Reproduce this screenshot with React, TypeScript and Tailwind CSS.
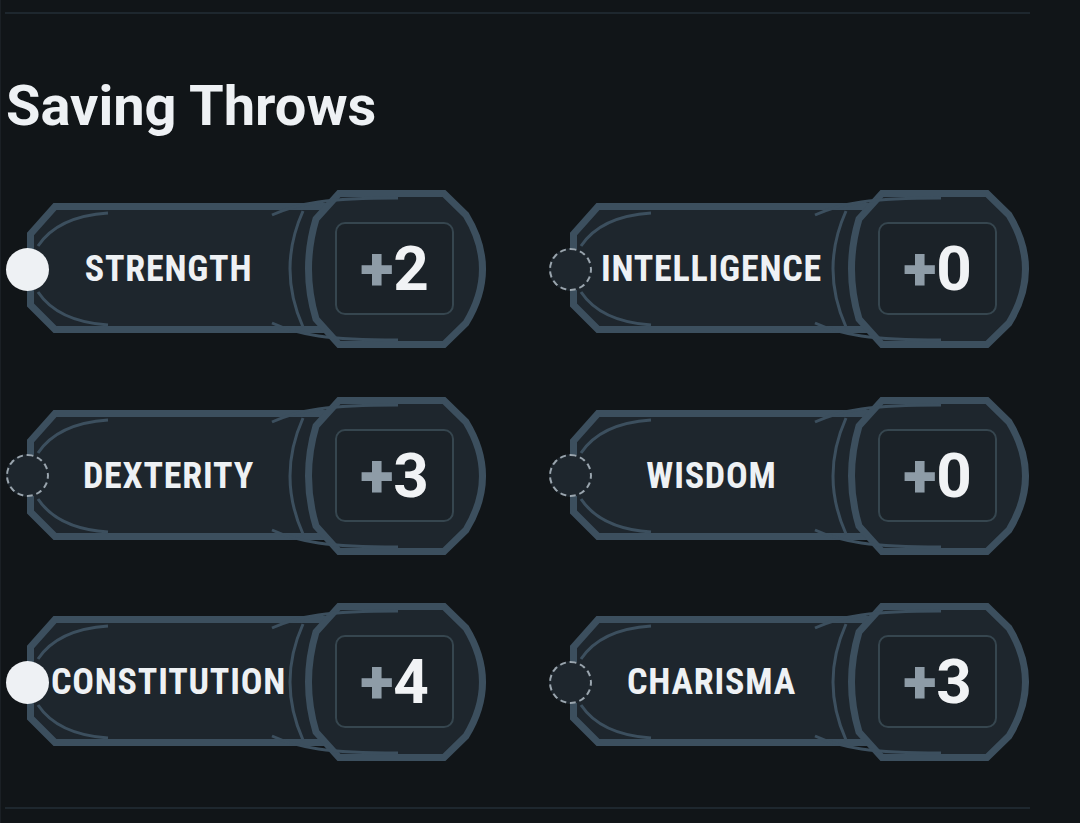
import React from "react";

type Row = { label: string; value: string; checked: boolean };

const rows: Row[] = [
  { label: "STRENGTH", value: "2", checked: true },
  { label: "INTELLIGENCE", value: "0", checked: false },
  { label: "DEXTERITY", value: "3", checked: false },
  { label: "WISDOM", value: "0", checked: false },
  { label: "CONSTITUTION", value: "4", checked: true },
  { label: "CHARISMA", value: "3", checked: false },
];

const BORDER = "#3c4f5e";
const FILL = "#1e262d";

function Frame() {
  return (
    <svg
      className="absolute inset-0"
      width={482}
      height={158}
      viewBox="0 0 482 158"
      fill="none"
    >
      {/* body */}
      <path
        d="M49 16.5 L340 16.5 L340 139.5 L49 139.5 L24.5 115 L24.5 44 Z"
        fill={FILL}
        stroke={BORDER}
        strokeWidth={7}
        strokeLinejoin="miter"
      />
      {/* inner left curves */}
      <path d="M102 23 C72 25 46 35 32 56" stroke={BORDER} strokeWidth={3} />
      <path d="M102 135 C72 133 46 123 32 102" stroke={BORDER} strokeWidth={3} />
      {/* thin arc right of body */}
      <path d="M297 21 Q271 79 297 137" stroke={BORDER} strokeWidth={3} />
      {/* circle piece */}
      <path
        d="M333 3.5 L438 3.5 L460 25 Q493 79 460 133 L438 154.5 L333 154.5 L310 129 Q295 79 310 29 Z"
        fill={FILL}
        stroke={BORDER}
        strokeWidth={7}
        strokeLinejoin="miter"
      />
      {/* swooshes */}
      <path d="M266 25 C292 13 322 8 392 8" stroke={BORDER} strokeWidth={3} />
      <path d="M266 133 C292 145 322 150 392 150" stroke={BORDER} strokeWidth={3} />
      {/* value box */}
      <rect
        x={330}
        y={33}
        width={117}
        height={91}
        rx={9}
        fill="#1b2228"
        stroke="#36464f"
        strokeWidth={2}
      />
    </svg>
  );
}

function Item({ label, value, checked }: Row) {
  return (
    <div className="relative w-[482px] h-[158px]">
      <Frame />
      <div className="relative flex h-full items-center">
        {checked ? (
          <div className="w-[43px] h-[43px] rounded-full bg-[#eef1f4] shrink-0" />
        ) : (
          <div className="w-[43px] h-[43px] rounded-full bg-[#1e262d] border-2 border-dashed border-[#9aa5ae] shrink-0" />
        )}
        <div className="w-[239px] flex justify-center shrink-0">
          <span className="whitespace-nowrap text-[36px] leading-none font-bold tracking-[0.8px] text-[#eef1f4] font-['Roboto_Condensed',Roboto,sans-serif]">
            {label}
          </span>
        </div>
        <div className="ml-[47px] w-[119px] flex justify-center shrink-0 font-['Roboto',sans-serif] text-[62px] leading-none">
          <span className="text-[#8e9ca7] font-black">+</span>
          <span className="text-[#f1f3f5] font-bold">{value}</span>
        </div>
      </div>
    </div>
  );
}

export default function App() {
  return (
    <div className="w-[1080px] h-[823px] bg-[#111518] overflow-hidden border-l border-[#1b2025] font-['Roboto',sans-serif]">
      <div className="pt-[12px] pl-[4px]">
        <div className="h-[2px] w-[1025px] bg-[#1e272e]" />
        <h1 className="mt-[64px] ml-[1px] text-[56px] leading-[57px] font-bold text-[#eef1f4]">
          Saving Throws
        </h1>
        <div className="mt-[55px] ml-[1px] grid grid-cols-[482px_482px] gap-x-[61px] gap-y-[48.5px]">
          {rows.map((r) => (
            <Item key={r.label} {...r} />
          ))}
        </div>
        <div className="mt-[46px] h-[2px] w-[1025px] bg-[#1e272e]" />
      </div>
    </div>
  );
}
